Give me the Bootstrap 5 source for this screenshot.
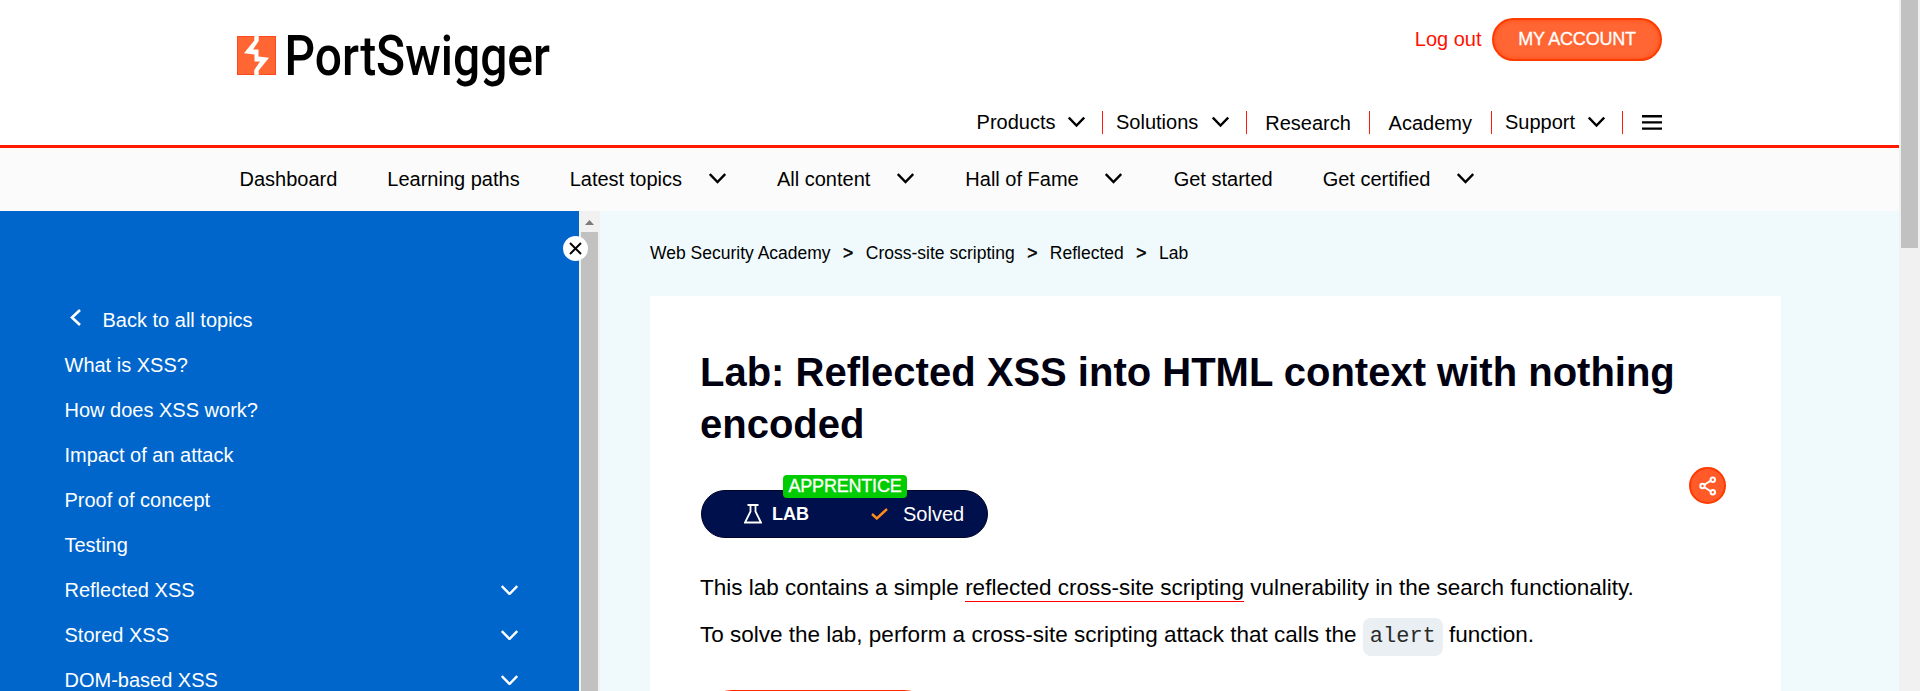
<!DOCTYPE html>
<html lang="en">
<head>
<meta charset="utf-8">
<meta name="viewport" content="width=device-width, initial-scale=1">
<title>Lab: Reflected XSS into HTML context with nothing encoded</title>
<link href="https://cdn.jsdelivr.net/npm/bootstrap@5.3.0/dist/css/bootstrap.min.css" rel="stylesheet">
<style>
  body { font-family: "Liberation Sans", Arial, sans-serif; font-size: 20px; line-height: 24px; color: #000; height: 691px; overflow: hidden; }
  a { color: inherit; text-decoration: none; white-space: nowrap; }
  svg { display: block; flex: none; }
  .chev { fill: none; stroke: currentColor; stroke-width: 2.4; }
  .page-scroll { width: 21px; background: #f1f1f1; padding: 0 2px; }
  .page-thumb { height: 248px; background: #c1c1c1; }
  .site-head { height: 148px; border-bottom: 3px solid #ff1900; padding: 18px 237px 0 237px; }
  .brand-logo { margin-top: -1px; }
  .brand-logo svg { overflow: visible; }
  .account { height: 43px; gap: 10.5px; }
  .logout { color: #f10; padding-bottom: 2px; }
  .btn-account { width: 170px; height: 43px; border-radius: 22px; background: #ff6633; border: 2px solid #ff3b00; box-shadow: inset 0 0 4px #ff4a10; color: #fff; font-size: 18px; letter-spacing: -.2px; padding-bottom: 2px; -webkit-text-stroke: .3px #fff; }
  .main-menu { margin-top: 50px; height: 23px; }
  .main-menu a { height: 23px; border-right: 1px solid #ff1a10; padding: 0 18px 2px 18.5px; }
  .main-menu a.roomy { padding: 0 19.5px 2px 18.7px; }
  .main-menu a.drop { padding: 0 17px 2px 12.5px; }
  .main-menu a svg { margin-left: 13px; }
  .main-menu a.wide svg { margin-left: 13.5px; }
  .plain-label { position: relative; top: 1px; }
  .sub-menu { height: 63px; background: #fbfbfb; padding: 0 0 1px 239.5px; gap: 50px; }
  .sub-menu svg { margin: 0 1.3px 0 26.7px; }
  .side { width: 579px; background: #06c; color: #fff; padding: 86px 61px 0 64.5px; }
  .side a { height: 45px; flex: none; }
  .side-scroll { width: 21px; background: #f1f1f1; padding: 9px 2px 0; }
  .side-thumb { background: #c1c1c1; margin-top: 7px; }
  .close-side { left: 563px; top: 25px; width: 25px; height: 25px; background: #fff; }
  .content { background: #f0fafc; padding: 30px 0 0 50px; }
  .crumbs { font-size: 17.5px; height: 24px; }
  .crumbs b { font-weight: 400; -webkit-text-stroke: .5px #000; padding: 0 12.5px; }
  .sheet { width: 1131px; height: 420px; margin-top: 31px; padding: 50px 50px 0; background: #fff; }
  h1 { font-size: 40px; line-height: 52px; font-weight: 700; margin: 0; color: #000010; white-space: nowrap; }
  .status { margin: 40px 0 0 1px; width: 287px; height: 48px; border-radius: 24px; background: #00104d; border: 1px solid #000428; color: #fff; padding: 0 0 0 42px; }
  .level { left: 81px; top: -16px; width: 124px; height: 23px; border-radius: 4px; background: #0c0; font-size: 18px; line-height: 23px; letter-spacing: -.2px; text-align: center; -webkit-text-stroke: .3px #fff; }
  .lab-word { font-size: 18px; margin-left: 10px; width: 99px; }
  .solved { margin-left: 15px; }
  .share { width: 37px; height: 37px; background: #ff5a28; border: 2px solid #ff3a00; margin: 17px 5px 0 0; }
  .desc { font-size: 22.5px; line-height: 32px; white-space: nowrap; margin: 14px 0 0; }
  .desc.first { margin-top: 34px; }
  .desc a { display: inline-block; line-height: 26px; border-bottom: 1px solid #f00; }
  .desc code { display: inline-block; font-family: "Liberation Mono", monospace; font-size: 22px; line-height: 38px; width: 80px; text-align: center; border-radius: 8px; background: #e9eff2; color: #2a2a2a; }
  .hint { width: 234px; height: 62px; border-radius: 31px; border: 1px solid #ff2a00; margin: 34px 0 0 1px; }
</style>
</head>
<body class="d-flex">
<div class="flex-grow-1 d-flex flex-column">
  <header class="site-head d-flex justify-content-between flex-shrink-0 bg-white">
    <a class="brand-logo" href="#" aria-label="PortSwigger">
      <svg width="320" height="80" viewBox="0 -14 320 80">
        <rect y="5" width="39" height="39" fill="#ff6633"/>
        <rect x=".5" y="5.500" width="38" height="38" fill="none" stroke="#ff4a1c"/>
        <path d="M17.300 5V9.500L7 22.300L17.500 23.600V30.500H23L17.300 39V44H21.700V39.500L32 26.700L21.500 25.400V18.500H16L21.700 10V5Z" fill="#fff"/>
        <text x="47.500" y="44" textLength="265.500" lengthAdjust="spacingAndGlyphs" font-family="Roboto, sans-serif" font-size="54.800" font-weight="500">PortSwigger</text>
      </svg>
    </a>
    <div class="d-flex flex-column align-items-end">
      <div class="account d-flex align-items-center">
        <a class="logout" href="#">Log out</a>
        <a class="btn-account d-flex align-items-center justify-content-center" href="#">MY ACCOUNT</a>
      </div>
      <nav class="main-menu d-flex align-items-center">
        <a class="drop d-flex align-items-center" href="#">Products<svg class="chev" width="17" height="12"><path d="M.8 1.500L8.500 9.500L16.200 1.500"/></svg></a>
        <a class="drop wide d-flex align-items-center" href="#">Solutions<svg class="chev" width="17" height="12"><path d="M.8 1.500L8.500 9.500L16.200 1.500"/></svg></a>
        <a class="d-flex align-items-center" href="#"><span class="plain-label">Research</span></a>
        <a class="roomy d-flex align-items-center" href="#"><span class="plain-label">Academy</span></a>
        <a class="drop d-flex align-items-center" href="#">Support<svg class="chev" width="17" height="12"><path d="M.8 1.500L8.500 9.500L16.200 1.500"/></svg></a>
        <svg width="39" height="15"><path d="M19 1.200H39M19 7.400H39M19 13.600H39" stroke="#000" stroke-width="2.400"/></svg>
      </nav>
    </div>
  </header>
  <nav class="sub-menu d-flex align-items-center flex-shrink-0">
    <a href="#">Dashboard</a>
    <a href="#">Learning paths</a>
    <a class="d-flex align-items-center" href="#">Latest topics<svg class="chev" width="17" height="12"><path d="M.8 1L8.500 9L16.200 1"/></svg></a>
    <a class="d-flex align-items-center" href="#">All content<svg class="chev" width="17" height="12"><path d="M.8 1L8.500 9L16.200 1"/></svg></a>
    <a class="d-flex align-items-center" href="#">Hall of Fame<svg class="chev" width="17" height="12"><path d="M.8 1L8.500 9L16.200 1"/></svg></a>
    <a href="#">Get started</a>
    <a class="d-flex align-items-center" href="#">Get certified<svg class="chev" width="17" height="12"><path d="M.8 1L8.500 9L16.200 1"/></svg></a>
  </nav>
  <div class="d-flex flex-grow-1 position-relative overflow-hidden">
    <aside class="side d-flex flex-column flex-shrink-0">
      <a class="d-flex align-items-center" href="#"><svg class="me-3" width="22" height="22"><path d="M15 1L7 8.500L15 16" fill="none" stroke="#fff" stroke-width="2.600"/></svg>Back to all topics</a>
      <a class="d-flex align-items-center" href="#">What is XSS?</a>
      <a class="d-flex align-items-center" href="#">How does XSS work?</a>
      <a class="d-flex align-items-center" href="#">Impact of an attack</a>
      <a class="d-flex align-items-center" href="#">Proof of concept</a>
      <a class="d-flex align-items-center" href="#">Testing</a>
      <a class="d-flex align-items-center justify-content-between" href="#">Reflected XSS<svg class="chev" width="17" height="10"><path d="M.8 1L8.500 9L16.200 1"/></svg></a>
      <a class="d-flex align-items-center justify-content-between" href="#">Stored XSS<svg class="chev" width="17" height="10"><path d="M.8 1L8.500 9L16.200 1"/></svg></a>
      <a class="d-flex align-items-center justify-content-between" href="#">DOM-based XSS<svg class="chev" width="17" height="10"><path d="M.8 1L8.500 9L16.200 1"/></svg></a>
    </aside>
    <div class="side-scroll d-flex flex-column flex-shrink-0">
      <svg width="17" height="5"><path d="M4 5L8.500 0L13 5Z" fill="#7b7b7b"/></svg>
      <div class="side-thumb flex-grow-1"></div>
    </div>
    <span class="close-side position-absolute rounded-circle d-flex align-items-center justify-content-center"><svg width="13" height="13"><path d="M1 1L12 12M12 1L1 12" stroke="#000" stroke-width="1.900"/></svg></span>
    <main class="content flex-grow-1">
      <nav class="crumbs d-flex align-items-center"><a href="#">Web Security Academy</a><b>&gt;</b><a href="#">Cross-site scripting</a><b>&gt;</b><a href="#">Reflected</a><b>&gt;</b><a href="#">Lab</a></nav>
      <article class="sheet">
        <h1>Lab: Reflected XSS into HTML context with nothing<br>encoded</h1>
        <div class="d-flex justify-content-between">
          <div class="status d-flex align-items-center position-relative">
            <span class="level position-absolute">APPRENTICE</span>
            <svg width="18" height="20" fill="none" stroke="#fff" stroke-width="1.800"><path d="M3.500 1H14.500M6.500 1V7.500L1 18.500H17L11.500 7.500V1"/></svg>
            <b class="lab-word">LAB</b>
            <svg width="17" height="12"><path d="M1 6L5.800 10.500L16 1" fill="none" stroke="#ff8c1a" stroke-width="2.400"/></svg>
            <span class="solved">Solved</span>
          </div>
          <span class="share rounded-circle d-flex align-items-center justify-content-center"><svg width="18" height="20" fill="none" stroke="#fff" stroke-width="2"><path d="M5 9L12 4.500M5 11L12 15.500"/><circle cx="3.500" cy="10" r="2.200"/><circle cx="13.800" cy="3.800" r="2.200"/><circle cx="13.800" cy="16.200" r="2.200"/></svg></span>
        </div>
        <p class="desc first">This lab contains a simple <a href="#">reflected cross-site scripting</a> vulnerability in the search functionality.</p>
        <p class="desc">To solve the lab, perform a cross-site scripting attack that calls the <code>alert</code> function.</p>
        <div class="hint"></div>
      </article>
    </main>
  </div>
</div>
<div class="page-scroll flex-shrink-0"><div class="page-thumb"></div></div>
<script src="https://cdn.jsdelivr.net/npm/bootstrap@5.3.0/dist/js/bootstrap.bundle.min.js"></script>
</body>
</html>
